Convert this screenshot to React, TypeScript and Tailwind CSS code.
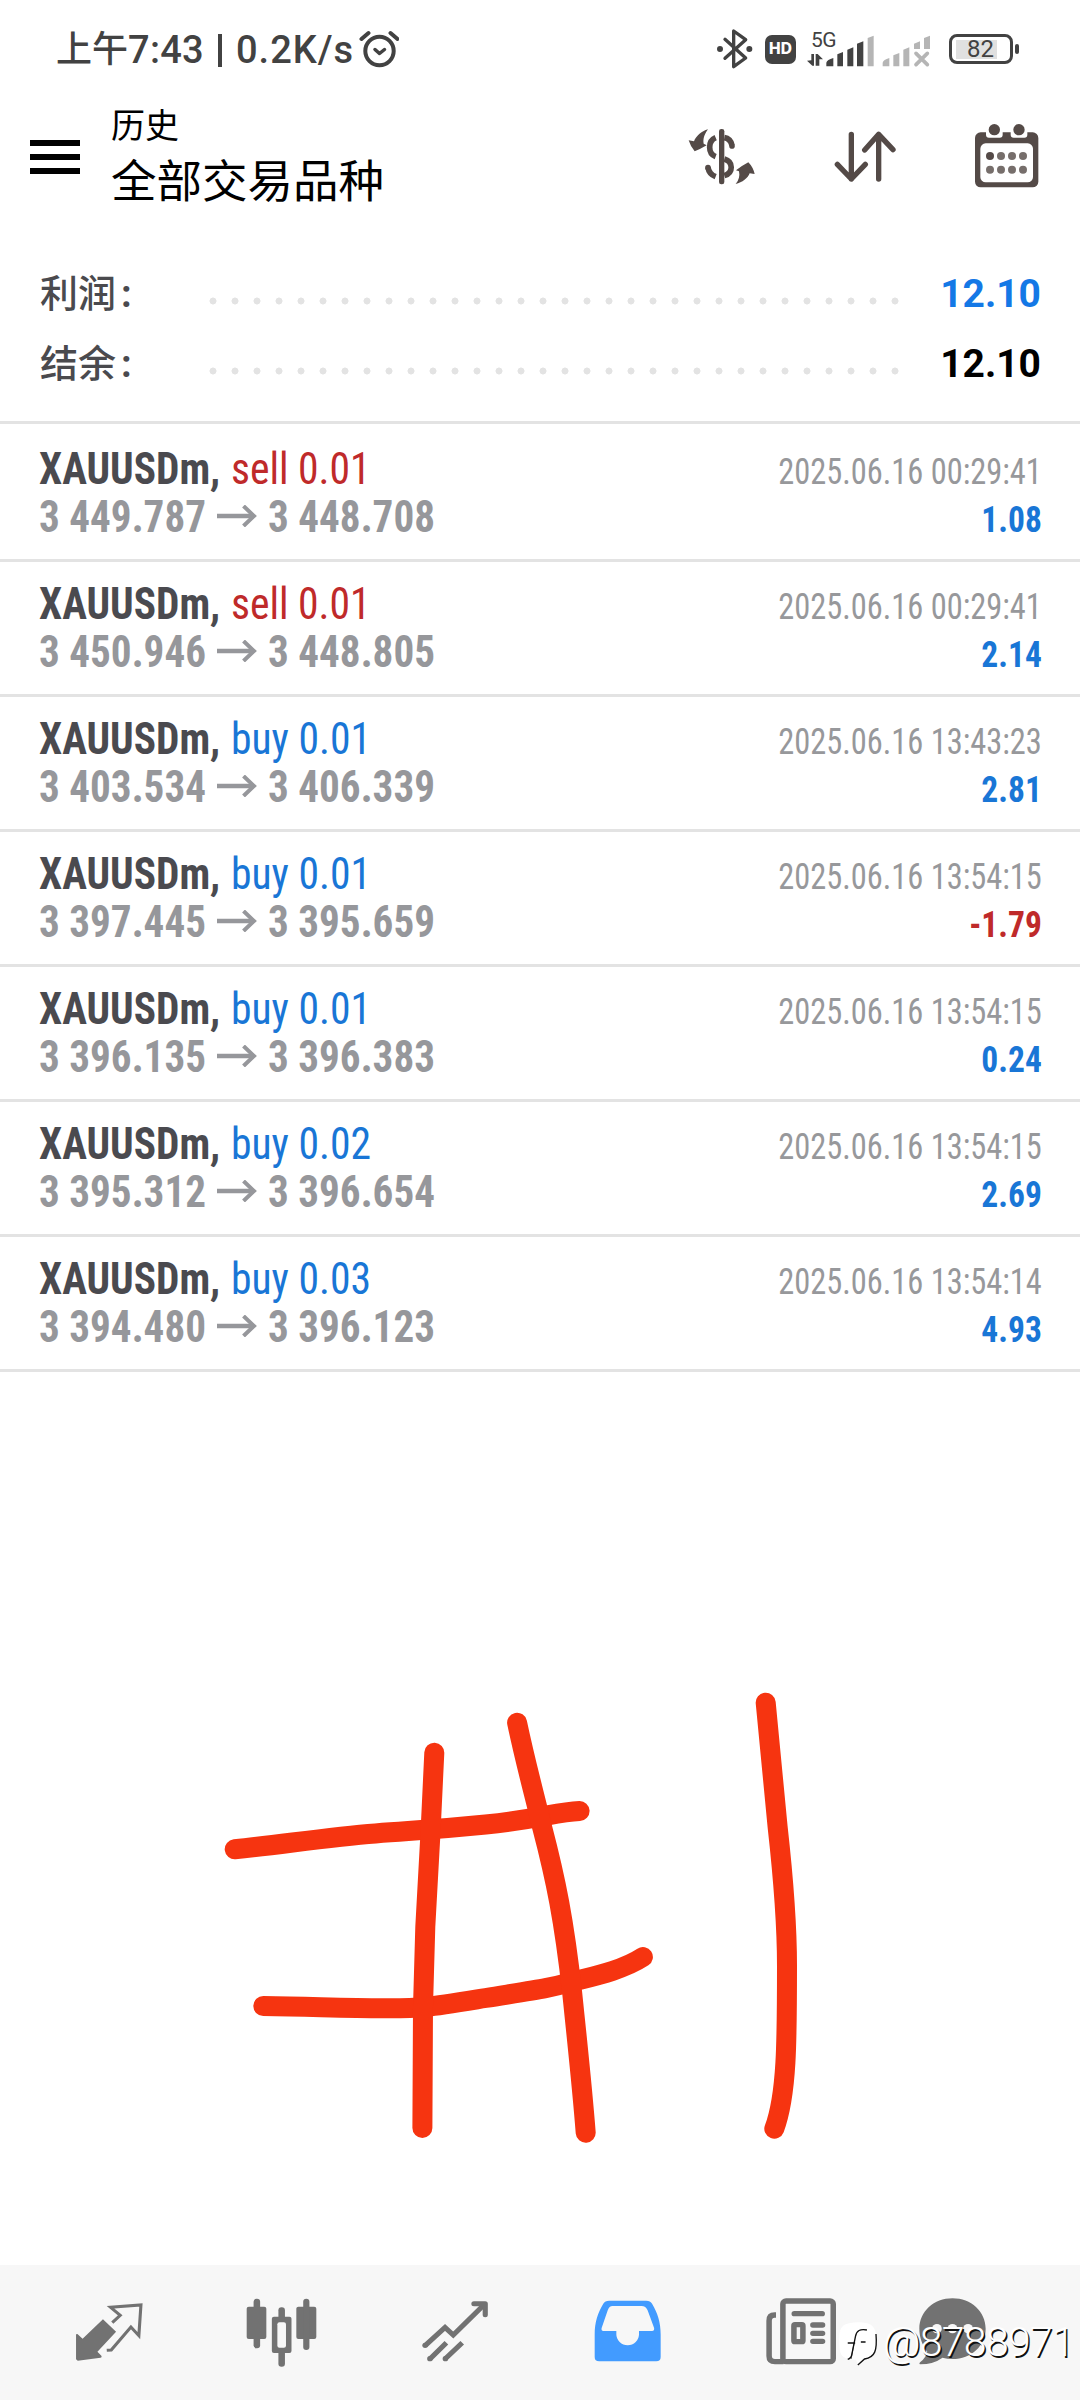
import type { ReactNode } from "react";

type Deal = {
  side: "buy" | "sell";
  volume: string;
  open: string;
  close: string;
  time: string;
  profit: string;
};

const deals: Deal[] = [
  { side: "sell", volume: "0.01", open: "3 449.787", close: "3 448.708", time: "2025.06.16 00:29:41", profit: "1.08" },
  { side: "sell", volume: "0.01", open: "3 450.946", close: "3 448.805", time: "2025.06.16 00:29:41", profit: "2.14" },
  { side: "buy", volume: "0.01", open: "3 403.534", close: "3 406.339", time: "2025.06.16 13:43:23", profit: "2.81" },
  { side: "buy", volume: "0.01", open: "3 397.445", close: "3 395.659", time: "2025.06.16 13:54:15", profit: "-1.79" },
  { side: "buy", volume: "0.01", open: "3 396.135", close: "3 396.383", time: "2025.06.16 13:54:15", profit: "0.24" },
  { side: "buy", volume: "0.02", open: "3 395.312", close: "3 396.654", time: "2025.06.16 13:54:15", profit: "2.69" },
  { side: "buy", volume: "0.03", open: "3 394.480", close: "3 396.123", time: "2025.06.16 13:54:14", profit: "4.93" },
];

function StatusBar() {
  return (
    <div className="flex h-[98px] shrink-0 items-center justify-between pl-[56px] pr-[61px] text-[#424242]">
      <div className="flex items-center pt-[2px] text-[38px] leading-[50px] font-medium whitespace-pre">
        <span className="w-[72px] text-[36px]">上午</span>
        <span className="w-[90px] tracking-[0.3px]">7:43</span>
        <span className="mr-[14px] h-[33px] w-[4px] bg-[#424242]" />
        <span className="w-[123px] tracking-[1px]">0.2K/s</span>
        <svg className="-mt-[2px] h-[38px] w-[40px]" viewBox="0 0 40 38" fill="none" stroke="#424242" strokeLinecap="round" strokeLinejoin="round">
          <circle cx="20.5" cy="21" r="14.2" strokeWidth="4" />
          <path d="M2.5 9 9.5 3M38.500 9 31.500 3" strokeWidth="4" />
          <path d="m16 19.500 4.500 4 5-4" strokeWidth="3.500" />
        </svg>
      </div>
      <div className="flex items-center">
        <svg className="mr-[12px] h-[40px] w-[37px]" viewBox="168 87 111 120" fill="none" stroke="#424242" strokeWidth="10" strokeLinejoin="round" strokeLinecap="round">
          <path d="m195 118 62 56-36 26V93l36 26-62 56" />
          <circle cx="180" cy="147" r="5" fill="#424242" strokeWidth="8" />
          <circle cx="268" cy="147" r="5" fill="#424242" strokeWidth="8" />
        </svg>
        <div className="mr-[11px] flex h-[29px] w-[31px] items-center justify-center rounded-[7px] bg-[#424242] font-[Inter] text-[15.500px] font-extrabold text-white">
          HD
        </div>
        <div className="mr-[8px] flex h-[38px] w-[67px] flex-col">
          <span className="h-[16px] pl-[4px] text-[21px] leading-[20px] tracking-[-0.5px]">5G</span>
          <svg className="-mt-[12px] h-[34px] w-[67px]" viewBox="444 98 201 102" fill="#424242">
            <path d="m444 178 13-1v-19h8v35h-5zM470 158h6l16 16h-11v19h-11z" />
            <path d="M502 195v-11q2-9 21-14v25zM535 195v-36l17-7v43zM565 195v-50l18-7v57zM594 195v-68l19-7v75z" />
            <path d="M626 195v-85l18-7v92z" fill="#b5b5b5" />
          </svg>
        </div>
        <svg className="mr-[17px] mt-[4px] h-[34px] w-[50px]" viewBox="668 98 150 102" fill="#b5b5b5">
          <path d="M670 195v-11q2-9 20-14v25zM702 195v-33l18-7v40zM732 195v-50l18-7v57zM764 143v-16l18-7v23zM794 143v-33l18-7v40z" />
          <path d="m770 156 34 34M804 156l-34 34" stroke="#b5b5b5" strokeWidth="11" strokeLinecap="round" />
        </svg>
        <div className="flex items-center">
          <div className="flex h-[30px] w-[64px] items-center rounded-[8px] border-3 border-[#424242] px-[4px]">
            <div className="flex h-[19px] w-[41px] items-center bg-[#e0e0e0] pl-[11px] text-[24px] leading-[19px]">82</div>
          </div>
          <div className="ml-[2px] h-[10px] w-[4px] rounded-[2px] bg-[#424242]" />
        </div>
      </div>
    </div>
  );
}

function Header() {
  return (
    <header className="flex h-[161px] shrink-0 items-start pl-[30px] text-black">
      <div className="mt-[42px] flex w-[81px] flex-col gap-[8px]">
        <span className="h-[6px] w-[50px] bg-black" />
        <span className="h-[6px] w-[50px] bg-black" />
        <span className="h-[6px] w-[50px] bg-black" />
      </div>
      <div className="w-[577px]">
        <p className="mt-[3px] text-[34px] leading-[50px]">历史</p>
        <h1 className="mt-[1px] text-[45.500px] leading-[62px]">全部交易品种</h1>
      </div>
      <svg className="mt-[30px] mr-[78px] h-[58px] w-[68px]" viewBox="85 384 204 174" fill="#544a47">
        <path d="M145 388c-12 16-15 30-13 43l9 5q-20 12-36 18-12-13-18-33l16 3c6-16 22-30 42-36zM228 552c10-12 13-24 10-38l-9-3q18-14 37-24 14 14 19 35l-15-2c-5 14-22 28-42 32z" />
        <rect x="178" y="387" width="16" height="166" rx="7" />
        <path d="M168 413c-24 10-24 48 0 57M194 413c12 2 20 10 23 23M194 477c27 8 28 41 0 50M145 502c2 14 10 23 23 28" fill="none" stroke="#544a47" strokeWidth="17" />
        <circle cx="217" cy="438" r="8.500" />
        <circle cx="145" cy="503" r="8.500" />
      </svg>
      <svg className="mt-[33px] mr-[78px] h-[52px] w-[62px]" viewBox="522 393 186 156" fill="none" stroke="#544a47" strokeWidth="16" strokeLinecap="round" strokeLinejoin="round">
        <path d="M574 403v134M532 493l42 44 42-44M656 537V403M614 450l42-47 43 46" />
      </svg>
      <svg className="mt-[26px] h-[64px] w-[66px]" viewBox="942 371 198 192">
        <rect x="945" y="396" width="190" height="165" rx="17" fill="#544a47" />
        <rect x="961" y="429" width="158" height="117" rx="16" fill="#fff" />
        <path d="M978 390h50v13q0 9-9 9h-32q-9 0-9-9zM1052 390h50v13q0 9-9 9h-32q-9 0-9-9z" fill="#fff" />
        <circle cx="1003" cy="388" r="17" fill="#544a47" />
        <circle cx="1077" cy="388" r="17" fill="#544a47" />
        <circle cx="990" cy="467" r="12" fill="#544a47" />
        <g fill="#766e6b">
          <circle cx="1023" cy="467" r="12" />
          <circle cx="1056" cy="467" r="12" />
          <circle cx="1089" cy="467" r="12" />
          <circle cx="990" cy="508" r="12" />
          <circle cx="1023" cy="508" r="12" />
          <circle cx="1056" cy="508" r="12" />
          <circle cx="1089" cy="508" r="12" />
        </g>
      </svg>
    </header>
  );
}

function SummaryRow({ label, value, valueClass }: { label: string; value: string; valueClass: string }) {
  return (
    <div className="flex h-[70px] items-center pl-[40px] pr-[39px]">
      <span className="w-[162px] text-[38px] leading-[70px] font-medium text-[#4a4a4e]">
        {label}
        <b className="ml-[5px]">:</b>
      </span>
      <span className="mt-[13px] h-[8px] w-[704px] bg-[radial-gradient(circle,#e3e3e3_3.2px,transparent_3.8px)] bg-[length:22px_8px]" />
      <span className={`flex-1 text-right text-[39px] leading-[70px] font-bold ${valueClass}`}>{value}</span>
    </div>
  );
}

function DealRow({ deal }: { deal: Deal }) {
  return (
    <li className="flex h-[135px] justify-between border-b-3 border-[#e3e3e3] pt-[18px] pl-[39px] pr-[38px] leading-[48px] whitespace-pre font-stretch-condensed first:h-[138px] first:pt-[21px]">
      <div className="text-[44px]">
        <p className="flex">
          <b className="w-[192px] origin-left scale-x-[0.94] text-[#4a4a4f]">XAUUSDm,</b>
          <span className={deal.side === "sell" ? "origin-left scale-x-[0.945] text-[#bf2a2a]" : "origin-left scale-x-[0.945] text-[#1976d6]"}>
            {deal.side} {deal.volume}
          </span>
        </p>
        <p className="flex font-bold text-[#96979b]">
          <span className="w-[178px] origin-left scale-x-[0.935]">{deal.open}</span>
          <svg className="mt-[12px] mr-[11px] h-[22px] w-[40px]" viewBox="0 0 40 22" fill="none" stroke="#96979b" strokeWidth="4">
            <path d="M0 11h37" strokeWidth="4.500" />
            <path d="M26.500 1 37 11 26.500 21" />
          </svg>
          <span className="origin-left scale-x-[0.935]">{deal.close}</span>
        </p>
      </div>
      <div className="pt-[3px] text-right text-[36px]">
        <p className="origin-right scale-x-[0.9] text-[#97989b]">{deal.time}</p>
        <p className={deal.profit.startsWith("-") ? "origin-right scale-x-[0.93] font-bold text-[#bf2a2a]" : "origin-right scale-x-[0.93] font-bold text-[#1976d6]"}>
          {deal.profit}
        </p>
      </div>
    </li>
  );
}

// finger-drawn "#1" note over the empty part of the list
function Doodle() {
  return (
    <svg className="block h-[893px] w-[1080px] shrink-0" viewBox="0 1372 1080 893" fill="none" stroke="#f63410" strokeWidth="20" strokeLinecap="round" strokeLinejoin="round">
      <path d="M234.700 1849.300C285 1844 330 1837 375.500 1833.500S430 1830 485.700 1824.500S555 1812 579.600 1811" />
      <path d="M263.300 2006C320 2007 345 2008 383.700 2008.300S430 2007 485.700 1998S550 1988 567.300 1983S620 1972 642.900 1957" />
      <path d="M434.300 1752.700 430.600 1830.700 425.300 1926.700 423 2006.700 422.400 2128" />
      <path d="M517.100 1722.700C526 1765 534 1793 542 1826.700C556 1880 564 1920 572.200 1993C577 2040 582 2085 585.700 2132.700" />
      <path d="M765.700 1702.700 777.600 1826.700C783 1875 787 1925 787 1966C787 2040 787 2095 774.300 2128.700" />
    </svg>
  );
}

function Tab({ children, last = false }: { children: ReactNode; last?: boolean }) {
  return <div className={last ? "flex w-[131px] justify-center" : "flex w-[173px] justify-center"}>{children}</div>;
}

function TabBar() {
  return (
    <nav className="flex h-[135px] shrink-0 items-start bg-[#f7f7f7] pl-[22px] pt-[33px]">
      <Tab>
        <svg className="mt-[4px] h-[60px] w-[68px]" viewBox="216 187 197 180" preserveAspectRatio="none" fill="#727272">
          <path d="m219 284 4-1 15 14 59-58 38 37-54 60 12 13q1 5-3 5l-66 9-5-4z" />
          <path d="m324 249 23-22-28-24 88-7-6 92-23-26-57 69-13 1" fill="none" stroke="#727272" strokeWidth="9" />
        </svg>
      </Tab>
      <Tab>
        <svg className="h-[70px] w-[71px]" viewBox="713 172 206 210" preserveAspectRatio="none" fill="#727272">
          <rect x="715" y="198" width="57" height="97" rx="6" />
          <rect x="735" y="174" width="19" height="149" rx="9" />
          <rect x="859" y="198" width="58" height="97" rx="6" />
          <rect x="879" y="174" width="18" height="154" rx="9" />
          <rect x="788" y="228" width="57" height="109" rx="6" />
          <rect x="807" y="200" width="19" height="178" rx="9" />
          <rect x="804" y="245" width="25" height="76" rx="6" fill="#f7f7f7" />
        </svg>
      </Tab>
      <Tab>
        <svg className="mt-[2px] h-[63px] w-[66px]" viewBox="1222 180 192 189" preserveAspectRatio="none" fill="none" stroke="#727272" strokeWidth="15" strokeLinejoin="miter">
          <path d="m1231 317 58-55 24 23 88-89" />
          <path d="M1373 191h33v33" strokeLinecap="round" strokeLinejoin="round" />
          <path d="m1245 357 48-49M1289 357l50-49" />
          <g fill="#727272" stroke="none">
            <circle cx="1231" cy="316" r="8" />
            <circle cx="1245" cy="356" r="8" />
            <circle cx="1290" cy="356" r="8" />
          </g>
        </svg>
      </Tab>
      <Tab>
        <svg className="mt-[2px] h-[62px] w-[67px]" viewBox="156 180 195 186" preserveAspectRatio="none">
          <path d="M200 182h108q12 0 17 9c16 27 25 56 25 92v68q0 13-13 13H171q-13 0-13-13v-68c0-36 9-65 25-92q5-9 17-9z" fill="#429bff" />
          <path d="M210 198h84q13 0 18 13l19 53q1 9-6 9h-38v10a33 33 0 0 1-66 0v-10h-38q-6 0-5-8l18-54q4-13 14-13z" fill="#f7f7f7" />
        </svg>
      </Tab>
      <Tab>
        <svg className="h-[67px] w-[70px]" viewBox="656 173 203 201" preserveAspectRatio="none" fill="none" stroke="#727272" strokeWidth="16">
          <rect x="705" y="182" width="146" height="182" rx="9" />
          <path d="M685 224h-4q-16 0-16 17v106q0 17 17 17h25" />
          <path d="M738 220h81M792 254h28M792 279h28M792 303h28" strokeLinecap="round" />
          <rect x="737" y="253" width="26" height="51" rx="3" />
        </svg>
      </Tab>
      <Tab last>
        <svg className="h-[67px] w-[67px]" viewBox="1102 173 194 201" preserveAspectRatio="none" fill="#727272">
          <path d="M1199 174c54 0 96 40 96 91s-42 91-96 91q-16 0-29-4-26 20-65 20-4-2 1-7 16-13 20-31c-14-18-23-43-23-69 0-51 42-91 96-91z" />
          <g fill="#f7f7f7">
            <circle cx="1154" cy="265" r="14" />
            <circle cx="1199" cy="265" r="14" />
            <circle cx="1244" cy="265" r="14" />
          </g>
        </svg>
      </Tab>
    </nav>
  );
}

function Watermark() {
  return (
    <div className="absolute top-[2318px] left-[839px] flex items-start text-white">
      <svg className="mt-[4px] mr-[5px] h-[44px] w-[39px]" viewBox="58 64 116 132" preserveAspectRatio="none" fill="none">
        <path d="M88 68q27-6 54 0 27 6 27 47c0 44-9 56-36 61l-18 16-7-15q-25-1-37-9c-10-8-12-20-12-48 0-36 5-46 29-52z" fill="#fff" />
        <path d="M141 88c-20-4-31 2-34 19l-11 55c-1 8-6 12-12 14M84 127h22M123 124h14M168 100c4 50-3 70-34 75l-20 18" stroke="#111" strokeWidth="4" />
        <path d="M103 127l-9 48" stroke="#111" strokeWidth="2" />
      </svg>
      <span className="text-[41px] leading-[48px] font-light tracking-[-0.7px] [text-shadow:1.500px_1.500px_0_#111]">@8788971</span>
    </div>
  );
}

export default function App() {
  return (
    <div className="relative flex h-[2400px] w-[1080px] flex-col overflow-hidden bg-white font-[Roboto,'Noto_Sans_CJK_SC',sans-serif]">
      <StatusBar />
      <Header />
      <section className="h-[165px] shrink-0 border-b-3 border-[#e3e3e3]">
        <SummaryRow label="利润" value="12.10" valueClass="text-[#1478e6]" />
        <SummaryRow label="结余" value="12.10" valueClass="text-black" />
      </section>
      <ul className="shrink-0">
        {deals.map((deal) => (
          <DealRow key={deal.open} deal={deal} />
        ))}
      </ul>
      <Doodle />
      <TabBar />
      <Watermark />
    </div>
  );
}
